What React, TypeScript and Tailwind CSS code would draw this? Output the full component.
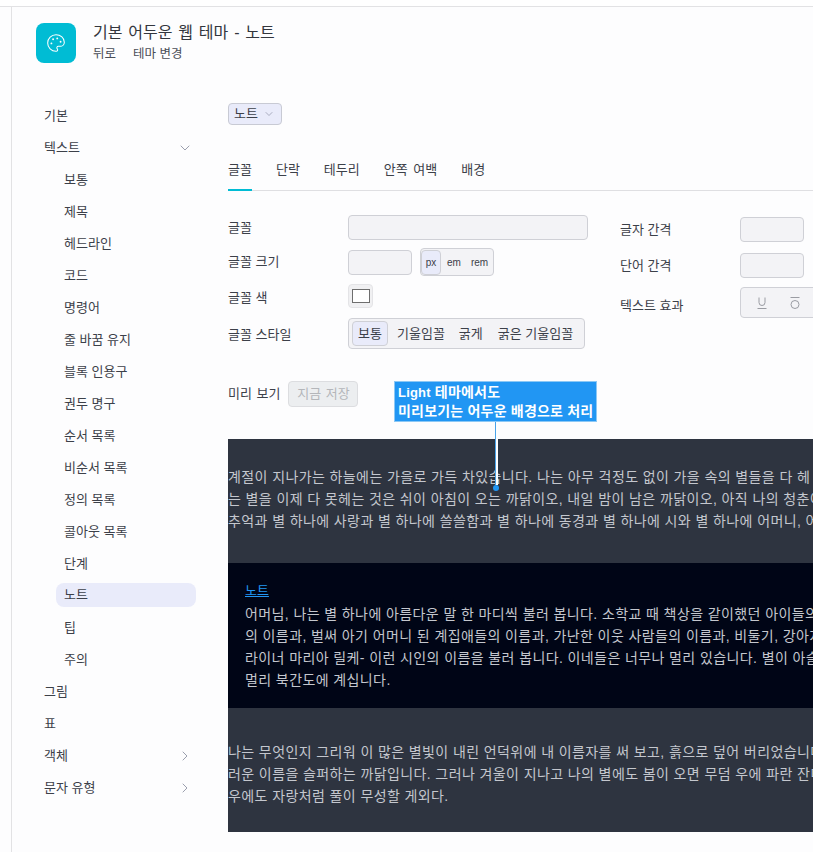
import { ChevronDown, ChevronRight, Palette } from 'lucide-react';

const subItems = ['보통', '제목', '헤드라인', '코드', '명령어', '줄 바꿈 유지', '블록 인용구', '권두 명구', '순서 목록', '비순서 목록', '정의 목록', '콜아웃 목록', '단계', '노트', '팁', '주의'];
const tabs = ['글꼴', '단락', '테두리', '안쪽 여백', '배경'];

const para1 = [
  '계절이 지나가는 하늘에는 가을로 가득 차있습니다. 나는 아무 걱정도 없이 가을 속의 별들을 다 헤',
  '는 별을 이제 다 못헤는 것은 쉬이 아침이 오는 까닭이오, 내일 밤이 남은 까닭이오, 아직 나의 청춘이',
  '추억과 별 하나에 사랑과 별 하나에 쓸쓸함과 별 하나에 동경과 별 하나에 시와 별 하나에 어머니, 어',
];
const note = [
  '어머님, 나는 별 하나에 아름다운 말 한 마디씩 불러 봅니다. 소학교 때 책상을 같이했던 아이들의',
  '의 이름과, 벌써 아기 어머니 된 계집애들의 이름과, 가난한 이웃 사람들의 이름과, 비둘기, 강아지,',
  '라이너 마리아 릴케- 이런 시인의 이름을 불러 봅니다. 이네들은 너무나 멀리 있습니다. 별이 아슬',
  '멀리 북간도에 계십니다.',
];
const para2 = [
  '나는 무엇인지 그리워 이 많은 별빛이 내린 언덕위에 내 이름자를 써 보고, 흙으로 덮어 버리었습니다',
  '러운 이름을 슬퍼하는 까닭입니다. 그러나 겨울이 지나고 나의 별에도 봄이 오면 무덤 우에 파란 잔디',
  '우에도 자랑처럼 풀이 무성할 게외다.',
];

function NavItem({ label, icon }: { label: string; icon?: React.ReactNode }) {
  return (
    <div className="h-8 flex items-center justify-between pl-[32px] pr-[35px]">
      <span>{label}</span>
      {icon}
    </div>
  );
}

function Field({ className }: { className: string }) {
  return <div className={`bg-[#f3f3f6] border border-[#cfd0d6] rounded ${className}`} />;
}

export default function App() {
  return (
    <div className="w-[813px] h-[852px] overflow-hidden bg-white pt-[6px] text-[13px] text-[#3c4049] font-['Liberation_Sans','Noto_Sans_CJK_KR',sans-serif]">
      <div className="h-[846px] border-t border-[#e2e2e4] bg-[#fdfdfe] pl-[11px]">
        <div className="h-full border-l border-[#e2e2e4]">
          {/* header */}
          <div className="flex items-center gap-[17px] pl-[24px] pt-[16px]">
            <div className="w-10 h-10 rounded-lg bg-[#00bcd4] flex items-center justify-center">
              <Palette size={20} strokeWidth={1.25} color="#fff" />
            </div>
            <div className="h-10">
              <div className="text-[16px] leading-5 text-[#33363d] [word-spacing:1.4px]">기본 어두운 웹 테마 - 노트</div>
              <div className="flex gap-[17px] pt-px leading-5 text-[12.5px] text-[#4a4e57]">
                <span>뒤로</span>
                <span>테마 변경</span>
              </div>
            </div>
          </div>

          <div className="flex mt-[37px]">
            {/* sidebar */}
            <div className="w-[216px] shrink-0">
              <NavItem label="기본" />
              <NavItem label="텍스트" icon={<ChevronDown size={16} strokeWidth={1} color="#6a6f85" />} />
              {subItems.map((item) => (
                <div
                  key={item}
                  className={
                    item === '노트'
                      ? 'h-6 mt-[3px] mb-[5px] ml-[44px] mr-[32px] pl-2 flex items-center rounded-lg bg-[#e9ebfa]'
                      : 'h-8 flex items-center pl-[52px]'
                  }
                >
                  {item}
                </div>
              ))}
              <NavItem label="그림" />
              <NavItem label="표" />
              <NavItem label="객체" icon={<ChevronRight size={16} strokeWidth={1} color="#6a6f85" />} />
              <NavItem label="문자 유형" icon={<ChevronRight size={16} strokeWidth={1} color="#6a6f85" />} />
            </div>

            {/* main */}
            <div className="relative flex-1 min-w-0 overflow-hidden -mt-[1px]">
              <div className="mt-[4px] w-[54px] h-[22px] rounded border border-[#c8cad4] bg-[#e9ebfa] flex items-center gap-[5px] pl-[5px]">
                <span>노트</span>
                <ChevronDown size={12} strokeWidth={1} color="#6a6f85" />
              </div>

              <div className="flex gap-[24px] mt-[33px] h-[33px] border-b border-[#dfdfe2] [word-spacing:2px]">
                {tabs.map((tab) => (
                  <div key={tab} className={tab === '글꼴' ? 'h-[33px] pt-[2px] border-b-2 border-[#00bcd4]' : 'pt-[2px]'}>
                    {tab}
                  </div>
                ))}
              </div>

              <div className="flex mt-[24px]">
                <div className="w-[392px] shrink-0">
                  <div className="flex items-center h-[25px]">
                    <span className="w-[120px]">글꼴</span>
                    <Field className="w-[240px] h-[25px]" />
                  </div>
                  <div className="flex items-center h-[28px] mt-[8px]">
                    <span className="w-[120px]">글꼴 크기</span>
                    <Field className="w-[64px] h-[25px]" />
                    <div className="ml-2 w-[74px] h-[28px] rounded border border-[#cfd0d6] bg-[#f3f3f6] flex items-center text-[10px]">
                      <span className="w-[20px] h-[25px] flex items-center justify-center rounded bg-[#e9ebfa] border border-[#cfd0d6]">px</span>
                      <span className="ml-[6px]">em</span>
                      <span className="ml-[10px]">rem</span>
                    </div>
                  </div>
                  <div className="flex items-center h-[24px] mt-[8px]">
                    <span className="w-[120px] pt-[3px]">글꼴 색</span>
                    <div className="w-[25px] h-[24px] rounded bg-[#f0f0f2] border border-[#e4e4e7] flex items-center justify-center">
                      <div className="w-[18px] h-[14px] bg-white border border-[#6e6e6e]" />
                    </div>
                  </div>
                  <div className="flex items-center h-[31px] mt-[10px]">
                    <span className="w-[120px] pt-[2px]">글꼴 스타일</span>
                    <div className="w-[237px] h-[31px] rounded border border-[#cfd0d6] bg-[#f3f3f6] flex items-center pl-[3px]">
                      <span className="w-[36px] h-[25px] flex items-center justify-center rounded bg-[#e9ebfa] border border-[#cfd0d6]">보통</span>
                      <span className="ml-[9px]">기울임꼴</span>
                      <span className="ml-[14px]">굵게</span>
                      <span className="ml-[15px]">굵은 기울임꼴</span>
                    </div>
                  </div>
                </div>

                <div className="flex-1 pt-[2px]">
                  <div className="flex items-center h-[25px]">
                    <span className="w-[120px] shrink-0">글자 간격</span>
                    <Field className="w-[64px] h-[25px] shrink-0" />
                  </div>
                  <div className="flex items-center h-[25px] mt-[11px]">
                    <span className="w-[120px] shrink-0">단어 간격</span>
                    <Field className="w-[64px] h-[25px] shrink-0" />
                  </div>
                  <div className="flex items-center h-[31px] mt-[9px]">
                    <span className="w-[120px] shrink-0 pt-[7px]">텍스트 효과</span>
                    <div className="w-[90px] h-[31px] shrink-0 rounded border border-[#cfd0d6] bg-[#f3f3f6] flex items-center gap-[21px] pl-[15px]">
                      <svg width="12" height="14" viewBox="0 0 12 14" fill="none" stroke="#9a9ca3" strokeWidth="1">
                        <path d="M3 1.5v5a3 3 0 0 0 6 0v-5" />
                        <path d="M1.5 12.5h9" />
                      </svg>
                      <svg width="12" height="14" viewBox="0 0 12 14" fill="none" stroke="#9a9ca3" strokeWidth="1">
                        <path d="M1.5 1.5h9" />
                        <ellipse cx="6" cy="8.5" rx="4" ry="4" />
                      </svg>
                    </div>
                  </div>
                </div>
              </div>

              <div className="flex items-center mt-[32px] h-[26px] gap-[8px] [word-spacing:1px]">
                <span>미리 보기</span>
                <div className="w-[70px] h-[26px] rounded border border-[#dcdde0] bg-[#eceef0] text-[#b4b6ba] flex items-center justify-center">지금 저장</div>
              </div>

              {/* preview */}
              <div className="mt-[32px] h-[393px] bg-[#2e3440] text-[#c4c7ce] text-[14px] tracking-[0.4px] leading-[22px] whitespace-nowrap overflow-hidden">
                <div className="pt-[27px]">
                  {para1.map((line) => <div key={line}>{line}</div>)}
                </div>
                <div className="mt-[31px] h-[145px] bg-[#000516] pl-[17px] pt-[17px]">
                  <div className="text-[#2196f3] text-[13px] underline tracking-normal mb-px">노트</div>
                  {note.map((line) => <div key={line}>{line}</div>)}
                </div>
                <div className="pt-[33px]">
                  {para2.map((line) => <div key={line}>{line}</div>)}
                </div>
              </div>

              {/* annotation */}
              <div className="absolute left-[166px] top-[282px] w-[203px] h-[41px] bg-[#2196f3] border border-[#8cc8f5] text-white font-bold text-[14px] tracking-[0.2px] leading-[19px] px-[3px] py-px whitespace-nowrap">
                <div><span className="text-[13px]">Light</span> 테마에서도</div>
                <div>미리보기는 어두운 배경으로 처리</div>
              </div>
              <div className="absolute left-[267px] top-[323px] w-[3px] h-[63px] bg-white border-l border-[#4aa3e8]" />
              <div className="absolute left-[265px] top-[386px] w-[6px] h-[6px] rounded-full bg-[#2196f3]" />
            </div>
          </div>
        </div>
      </div>
    </div>
  );
}
